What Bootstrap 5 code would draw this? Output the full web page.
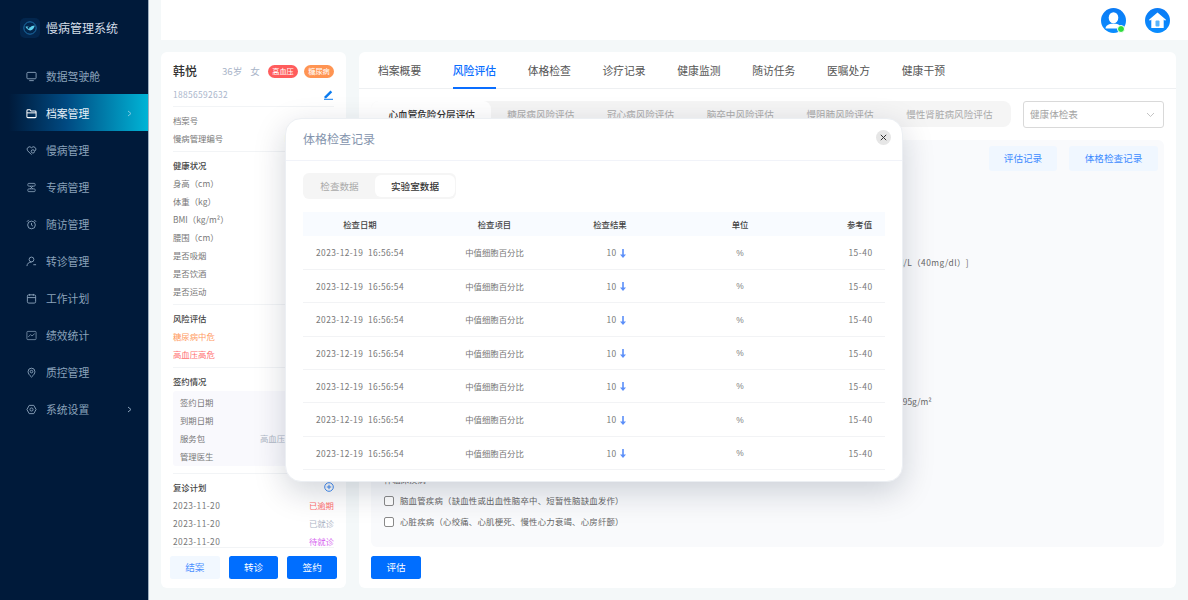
<!DOCTYPE html>
<html lang="zh">
<head>
<meta charset="utf-8">
<title>慢病管理系统</title>
<link href="https://cdn.jsdelivr.net/npm/bootstrap@5.3.0/dist/css/bootstrap.min.css" rel="stylesheet">
<style>
html,body{height:600px;overflow:hidden}
body{font-family:"Noto Sans CJK SC","Noto Sans",sans-serif;font-size:8.4px;color:#777;background:#f4f8f9;position:relative;text-spacing-trim:space-all;font-feature-settings:"chws" 0,"palt" 0,"halt" 0}
.app-shell{height:600px}
.side{width:149px;background:#001a3a;border-right:1px solid #9fb0c0;flex:none}
.brand{height:57px;padding:0 0 1px 20px;gap:6px;color:#d5dee8;font-size:12px}
.side-item{height:37px;padding:2px 0 0 26px;gap:9px;color:#8ba3bb;font-size:10.8px}
.side-item svg{width:11px;height:11px;flex:none}
.side-item.on{background:linear-gradient(90deg,rgba(0,26,58,0) 6%,#004a82 45%,#00b4d6 100%);color:#e8f1f8}
.side-arrow{margin-left:auto;margin-right:15px;width:7px!important;height:7px!important}
.top{height:40px;margin-left:12px;background:#fff;gap:19px;padding-right:18px}
.round-ico{width:25px;height:25px;border-radius:50%;background:linear-gradient(180deg,#0b7bf5,#0a8dff);position:relative}
.online{position:absolute;right:1px;bottom:0;width:6px;height:6px;border-radius:50%;background:#2fdc3c;border:1px solid #fff;box-sizing:content-box}
.work{height:536px;margin-top:12px;padding:0 12px;gap:13px}
.pcard{background:#fff;border-radius:6px}
.pat{width:185px;flex:none}
.pat-scroll{padding:10px 12px 0;height:495px;overflow:hidden}
.pat-name{font-size:12px;color:#333;font-weight:500;height:18px;line-height:18px}
.pat-meta{font-size:9.6px;color:#a8b4c8;line-height:18px;margin-left:25px;gap:8px}
.tagx{font-size:7.2px;color:#fff;line-height:13px;height:13px;width:30px;text-align:center;border-radius:7px}
.tagx-r{background:#ff5c5c}.tagx-o{background:#ff9452}
.tagrow{gap:6px}
.phone{color:#a9b5cb;line-height:18px;height:18px;margin-top:5px;letter-spacing:.34px}
.sect{border-top:1px solid #f2f4f6;padding:4px 0 4px}
.rw{height:18px;line-height:18px;display:flex;justify-content:space-between;white-space:nowrap}
.rw b{font-weight:500;color:#444}
.date-x{letter-spacing:.42px}
.val{color:#b0b8c6}
.soft{background:#f9f9fd;border-radius:3px;padding:2px 7px 1px;margin-top:1px;margin-bottom:3px}
.pat-foot{margin:0 12px;border-top:1px solid #f2f4f6;padding-top:8px;position:relative}
.pat-btns{margin:0 -3px;gap:9px}
.btn-x{width:50px;height:23px;padding:0;border:0;border-radius:2.5px;font-size:9.6px;line-height:23px}
.btn-fill{background:#006eff;color:#fff}
.btn-pale{background:#f2f8ff;color:#4a90ff}
.detail{min-width:0}
.main-tabs{height:37px;border-bottom:1px solid #eef0f2;padding-left:19px;gap:31.65px;font-size:10.8px;color:#555}
.main-tabs span{height:37px;line-height:36px;position:relative;white-space:nowrap}
.main-tabs .on{color:#0a6eff;font-weight:500;border-bottom:2px solid #0a6eff}
.detail-body{padding:12px 12px 0}
.subtabs{background:#f5f5f5;border-radius:8px;height:26px;font-size:9.6px;color:#aaa;white-space:nowrap;width:640px}
.subtabs span{padding:0 16.3px;line-height:26px}
.subtabs .on{background:#fff;color:#333;border-radius:8px;font-weight:500;padding:0 16px 0 17.5px}
.sel{width:141px;height:27px;border:1px solid #d9d9d9;border-radius:3px;font-size:9.6px;color:#a5a5a5;padding:0 8px 0 6px}
.panel{background:#f9fafc;border-radius:6px;height:407px;margin-top:12px;padding:6px 6px 0 13px}
.pbtn{height:25px;border:0;padding:0;background:#f0f7ff;color:#3d8bff;font-size:9.6px;border-radius:3px}
.pbtn-a{width:68px}.pbtn-b{width:89px}
.pbtn-row{gap:12px}
.lines{margin-top:18px}
.ln{height:21px;line-height:21px;color:#666;white-space:nowrap}
.ln .form-check-input{width:10px;height:10px;margin:0 6px 0 0;border-color:#8a8a8a;border-radius:2px;vertical-align:-1.5px;float:none}
.ln .tail{letter-spacing:.45px}
.ln-w{letter-spacing:.23px}
.gap-a{margin-top:13px}.gap-b{margin-top:15px}
.eval-wrap{margin-top:9px}
.dialog{position:absolute;left:285px;top:118px;width:618px;height:364px;border-radius:16px;border:1px solid #eceff3;box-shadow:0 10px 32px rgba(0,20,50,.18);background:#fff;overflow:hidden}
.dlg-head{height:42px;border-bottom:1px solid #f1f3f9;padding:0 11px 0 17px}
.dlg-title{font-size:12px;color:#8494ad;font-weight:400}
.dlg-close{width:15px;height:15px;border-radius:50%;background:#e6e6e6;border:0;padding:0;display:flex;align-items:center;justify-content:center;margin-top:-4px}
.dlg-body{padding:12px 17px 0}
.seg{width:153px;height:26px;background:#f5f5f5;border-radius:6px;font-size:9.6px;color:#aaa;padding:2px 1px}
.seg span{line-height:22px;text-align:center}
.seg .s1{width:71px}
.seg .s2{width:80px;background:#fff;color:#333;border-radius:6px;font-weight:500}
.rec{margin:13px 0 0;width:582px;table-layout:fixed;font-size:8.4px;--bs-table-bg:transparent}
.rec th{height:24px;padding:0;background:#f8fbff;color:#444;font-weight:500;text-align:center;vertical-align:middle;border:0}
.rec td{height:33.4px;padding:0;color:#777;text-align:center;vertical-align:middle;border-bottom:1px solid #f2f3f5;white-space:nowrap}
.rec .dt{letter-spacing:.42px;word-spacing:2.5px}
.rec .res{padding-left:12px;letter-spacing:.4px}
.rec .rng{letter-spacing:.55px;padding-left:4px}
.rec .rngh{padding-left:2px}
.rec .pct{font-family:"Liberation Sans",sans-serif;color:#808080;padding-top:1px}
.down{width:6px;height:9px;vertical-align:-1.5px;margin-left:3px}
</style>
</head>
<body>
<div class="app-shell d-flex">
  <nav class="side d-flex flex-column">
    <div class="brand d-flex align-items-center">
      <svg width="20" height="20" viewBox="0 0 20 20"><rect width="20" height="20" rx="5" fill="#03264d"/><circle cx="10" cy="10" r="6.2" fill="none" stroke="#1d6fa8" stroke-width="1"/><path d="M5.500 8.800c1.800-.7 3.300-.4 4.500.8 1-1.300 2.500-2.200 4.800-2.200-.5 2.600-2.400 4.800-4.700 5.200-1.800-.4-3.500-1.800-4.600-3.800z" fill="#5fd4ef"/><circle cx="8.500" cy="9.800" r="1" fill="#03264d"/></svg>
      <span>慢病管理系统</span>
    </div>
    <div class="side-item d-flex align-items-center"><svg viewBox="0 0 12 12" fill="none" stroke="currentColor"><rect x="1" y="1.500" width="10" height="7" rx="1"/><path d="M3.500 10.500h5"/></svg>数据驾驶舱</div>
    <div class="side-item on d-flex align-items-center"><svg viewBox="0 0 12 12" fill="none" stroke="#fff" stroke-width="1.100"><path d="M1 3a1 1 0 0 1 1-1h2.500l1 1.300H10a1 1 0 0 1 1 1V9.500a1 1 0 0 1-1 1H2a1 1 0 0 1-1-1z"/><path d="M1 5.300h10"/></svg>档案管理<svg class="side-arrow" viewBox="0 0 7 7" fill="none" stroke="#7fc8e0"><path d="M2 1l3 2.500L2 6"/></svg></div>
    <div class="side-item d-flex align-items-center"><svg viewBox="0 0 12 12" fill="none" stroke="currentColor"><path d="M6 10.500 1.800 6.300A2.600 2.600 0 0 1 6 3a2.600 2.600 0 0 1 4.200 3.300"/><circle cx="7.500" cy="7" r="1.800"/></svg>慢病管理</div>
    <div class="side-item d-flex align-items-center"><svg viewBox="0 0 12 12" fill="none" stroke="currentColor" stroke-width=".9"><rect x="2" y="1.500" width="8" height="3" rx="1"/><rect x="2" y="7.500" width="8" height="3" rx="1"/><path d="M4.500 4.500 7.500 7.500M7.500 4.500 4.500 7.500"/></svg>专病管理</div>
    <div class="side-item d-flex align-items-center"><svg viewBox="0 0 12 12" fill="none" stroke="currentColor"><circle cx="6" cy="6.500" r="4.200"/><path d="M6 4.300v2.400l1.500 1M1 3l2-2M11 3 9 1"/></svg>随访管理</div>
    <div class="side-item d-flex align-items-center"><svg viewBox="0 0 12 12" fill="none" stroke="currentColor"><circle cx="6" cy="3.800" r="2.600"/><path d="M1 11c.3-2.800 2-4.300 5-4.400M8 9.500h3"/></svg>转诊管理</div>
    <div class="side-item d-flex align-items-center"><svg viewBox="0 0 12 12" fill="none" stroke="currentColor"><rect x="1.500" y="2" width="9" height="9" rx="1.500"/><path d="M1.500 5h9M4 1v2M8 1v2"/></svg>工作计划</div>
    <div class="side-item d-flex align-items-center"><svg viewBox="0 0 12 12" fill="none" stroke="currentColor" stroke-opacity=".8"><rect x="1" y="1.500" width="10" height="9" rx="1"/><path d="M2.500 7.500 5 5l1.500 1.500L9.500 4"/></svg>绩效统计</div>
    <div class="side-item d-flex align-items-center"><svg viewBox="0 0 12 12" fill="none" stroke="currentColor"><path d="M6 11C3.500 8.800 2.300 6.900 2.300 5a3.700 3.700 0 0 1 7.400 0c0 1.900-1.200 3.800-3.700 6z"/><circle cx="6" cy="5" r="1.400"/></svg>质控管理</div>
    <div class="side-item d-flex align-items-center"><svg viewBox="0 0 12 12" fill="none" stroke="currentColor"><path d="M3.500 1.500h5L11 6 8.500 10.500h-5L1 6z"/><circle cx="6" cy="6" r="1.700"/></svg>系统设置<svg class="side-arrow" viewBox="0 0 7 7" fill="none" stroke="#8ba3bb"><path d="M2 1l3 2.500L2 6"/></svg></div>
  </nav>

  <div class="flex-grow-1 d-flex flex-column" style="min-width:0">
    <header class="top d-flex align-items-center justify-content-end">
      <div class="round-ico"><svg width="25" height="25" viewBox="0 0 25 25"><ellipse cx="12.500" cy="9.800" rx="4.800" ry="5.600" fill="#fff"/><path d="M4.500 20.500c.3-3.200 3-4 5.500-4.700h5c2.500.7 5.200 1.500 5.500 4.700z" fill="#fff"/></svg><span class="online"></span></div>
      <div class="round-ico"><svg width="25" height="25" viewBox="0 0 25 25"><path d="M12.500 4.500 21 11.800l-.9 1-1.400-1.200V20H6.300v-8.400l-1.400 1.200-.9-1z" fill="#fff"/><rect x="10.500" y="12.500" width="4" height="6" rx="1" fill="#58b4fb"/></svg></div>
    </header>

    <div class="work d-flex">
      <aside class="pcard pat d-flex flex-column">
        <div class="pat-scroll">
          <div class="d-flex align-items-center">
            <span class="pat-name">韩悦</span>
            <span class="pat-meta d-flex"><span>36岁</span><span>女</span></span>
            <span class="ms-auto d-flex align-items-center tagrow">
              <span class="tagx tagx-r">高血压</span><span class="tagx tagx-o">糖尿病</span>
            </span>
          </div>
          <div class="phone d-flex justify-content-between align-items-center"><span>18856592632</span>
            <svg width="11" height="11" viewBox="0 0 11 11"><path d="M1.500 7.500 7.500 1.500l1.700 1.700-6 6H1.500z" fill="#0a7bf0"/><path d="M1 10.300h9" stroke="#0a7bf0"/></svg>
          </div>
          <div class="sect" style="margin-top:3px">
            <div class="rw"><span>档案号</span></div>
            <div class="rw"><span>慢病管理编号</span><span class="val">MB20231219</span></div>
          </div>
          <div class="sect">
            <div class="rw"><b>健康状况</b></div>
            <div class="rw"><span>身高（cm）</span></div>
            <div class="rw"><span>体重（kg）</span></div>
            <div class="rw"><span>BMI（kg/m²）</span></div>
            <div class="rw"><span>腰围（cm）</span></div>
            <div class="rw"><span>是否吸烟</span></div>
            <div class="rw"><span>是否饮酒</span></div>
            <div class="rw"><span>是否运动</span></div>
          </div>
          <div class="sect">
            <div class="rw"><b>风险评估</b></div>
            <div class="rw"><span style="color:#ff9a62">糖尿病中危</span></div>
            <div class="rw"><span style="color:#ff6f6f">高血压高危</span></div>
          </div>
          <div class="sect">
            <div class="rw"><b>签约情况</b></div>
            <div class="soft">
              <div class="rw"><span>签约日期</span></div>
              <div class="rw"><span>到期日期</span></div>
              <div class="rw"><span>服务包</span><span class="val">高血压基础服务包</span></div>
              <div class="rw"><span>管理医生</span></div>
            </div>
          </div>
          <div class="sect">
            <div class="rw align-items-center"><b>复诊计划</b><svg width="10" height="10" viewBox="0 0 10 10" fill="none" stroke="#2f7ff0" stroke-width=".9"><circle cx="5" cy="5" r="4.300"/><path d="M5 2.800v4.400M2.800 5h4.400"/></svg></div>
            <div class="rw"><span class="date-x">2023-11-20</span><span style="color:#ff6f6f">已逾期</span></div>
            <div class="rw"><span class="date-x">2023-11-20</span><span style="color:#aeb6c6">已就诊</span></div>
            <div class="rw"><span class="date-x">2023-11-20</span><span style="color:#d86cf0">待就诊</span></div>
          </div>
        </div>
        <div class="pat-foot">
          <div class="pat-btns d-flex">
            <button class="btn-x btn-pale" type="button">结案</button>
            <button class="btn-x btn-fill" type="button">转诊</button>
            <button class="btn-x btn-fill" type="button">签约</button>
          </div>
        </div>
      </aside>

      <section class="pcard detail flex-grow-1">
        <div class="main-tabs d-flex">
          <span>档案概要</span><span class="on">风险评估</span><span>体格检查</span><span>诊疗记录</span><span>健康监测</span><span>随访任务</span><span>医嘱处方</span><span>健康干预</span>
        </div>
        <div class="detail-body">
          <div class="d-flex justify-content-between align-items-start">
            <div class="subtabs d-flex">
              <span class="on">心血管危险分层评估</span><span>糖尿病风险评估</span><span>冠心病风险评估</span><span>脑卒中风险评估</span><span>慢阻肺风险评估</span><span>慢性肾脏病风险评估</span>
            </div>
            <div class="sel d-flex align-items-center justify-content-between"><span>健康体检表</span><svg width="9" height="9" viewBox="0 0 9 9" fill="none" stroke="#b5b5b5" stroke-width=".8"><path d="M1 3l3.500 3.500L8 3"/></svg></div>
          </div>
          <div class="panel">
            <div class="d-flex justify-content-end pbtn-row">
              <button class="pbtn pbtn-a" type="button">评估记录</button>
              <button class="pbtn pbtn-b" type="button">体格检查记录</button>
            </div>
            <div class="lines">
              <div class="ln"><input class="form-check-input" type="checkbox">高血压（1~3级）</div>
              <div class="ln"><input class="form-check-input" type="checkbox">男性≥55岁；女性≥65岁</div>
              <div class="ln"><input class="form-check-input" type="checkbox">吸烟或被动吸烟</div>
              <div class="ln"><input class="form-check-input" type="checkbox">血脂异常 [ 总胆固醇 TC≥6.2mmol/L（240mg/dl）或低密度脂蛋白 LDL-C≥4.1mmol/L（160mg/dl）或高密度脂蛋白 HDL-C&lt;1.0mmol<span class="tail">/L（40mg/dl）]</span></div>
              <div class="ln"><input class="form-check-input" type="checkbox">早发心血管病家族史</div>
              <div class="ln"><input class="form-check-input" type="checkbox">腹型肥胖</div>
              <div class="ln"><input class="form-check-input" type="checkbox">高同型半胱氨酸血症</div>
              <div class="ln gap-a">靶器官损害</div>
              <div class="ln"><input class="form-check-input" type="checkbox">左心室肥厚</div>
              <div class="ln"><input class="form-check-input" type="checkbox">左心室肥厚 [ 心电图：Sokolow-Lyon 电压&gt;3.8mV或 Cornell 乘积&gt;244mV·ms ]；超声心动图左室质量指数 LVMI：男≥115g/m²，女≥95g/m²</div>
              <div class="ln"><input class="form-check-input" type="checkbox">颈动脉超声</div>
              <div class="ln"><input class="form-check-input" type="checkbox">估算的肾小球滤过率降低</div>
              <div class="ln gap-b">伴临床疾病</div>
              <div class="ln ln-w"><input class="form-check-input" type="checkbox">脑血管疾病（缺血性或出血性脑卒中、短暂性脑缺血发作）</div>
              <div class="ln ln-w"><input class="form-check-input" type="checkbox">心脏疾病（心绞痛、心肌梗死、慢性心力衰竭、心房纤颤）</div>
            </div>
          </div>
          <div class="eval-wrap"><button class="btn-x btn-fill" type="button">评估</button></div>
        </div>
      </section>
    </div>
  </div>
</div>

<div class="dialog">
  <div class="dlg-head d-flex align-items-center justify-content-between">
    <h5 class="dlg-title m-0">体格检查记录</h5>
    <button class="dlg-close" type="button" aria-label="关闭"><svg width="7" height="7" viewBox="0 0 7 7" stroke="#333" stroke-width="1"><path d="M.8.8l5.400 5.400M6.200.8.8 6.200"/></svg></button>
  </div>
  <div class="dlg-body">
    <div class="seg d-flex"><span class="s1">检查数据</span><span class="s2">实验室数据</span></div>
    <table class="table rec">
      <colgroup><col style="width:114px"><col style="width:155px"><col style="width:76px"><col style="width:184px"><col style="width:53px"></colgroup>
      <thead><tr><th>检查日期</th><th>检查项目</th><th>检查结果</th><th>单位</th><th class="rngh">参考值</th></tr></thead>
      <tbody>
        <tr><td class="dt">2023-12-19 16:56:54</td><td>中值细胞百分比</td><td class="res">10<svg class="down" viewBox="0 0 6 9"><path d="M2.200 0h1.600v5.500H6L3 9 0 5.500h2.200z" fill="#5b8ff9"/></svg></td><td class="pct">%</td><td class="rng">15-40</td></tr>
        <tr><td class="dt">2023-12-19 16:56:54</td><td>中值细胞百分比</td><td class="res">10<svg class="down" viewBox="0 0 6 9"><path d="M2.200 0h1.600v5.500H6L3 9 0 5.500h2.200z" fill="#5b8ff9"/></svg></td><td class="pct">%</td><td class="rng">15-40</td></tr>
        <tr><td class="dt">2023-12-19 16:56:54</td><td>中值细胞百分比</td><td class="res">10<svg class="down" viewBox="0 0 6 9"><path d="M2.200 0h1.600v5.500H6L3 9 0 5.500h2.200z" fill="#5b8ff9"/></svg></td><td class="pct">%</td><td class="rng">15-40</td></tr>
        <tr><td class="dt">2023-12-19 16:56:54</td><td>中值细胞百分比</td><td class="res">10<svg class="down" viewBox="0 0 6 9"><path d="M2.200 0h1.600v5.500H6L3 9 0 5.500h2.200z" fill="#5b8ff9"/></svg></td><td class="pct">%</td><td class="rng">15-40</td></tr>
        <tr><td class="dt">2023-12-19 16:56:54</td><td>中值细胞百分比</td><td class="res">10<svg class="down" viewBox="0 0 6 9"><path d="M2.200 0h1.600v5.500H6L3 9 0 5.500h2.200z" fill="#5b8ff9"/></svg></td><td class="pct">%</td><td class="rng">15-40</td></tr>
        <tr><td class="dt">2023-12-19 16:56:54</td><td>中值细胞百分比</td><td class="res">10<svg class="down" viewBox="0 0 6 9"><path d="M2.200 0h1.600v5.500H6L3 9 0 5.500h2.200z" fill="#5b8ff9"/></svg></td><td class="pct">%</td><td class="rng">15-40</td></tr>
        <tr><td class="dt">2023-12-19 16:56:54</td><td>中值细胞百分比</td><td class="res">10<svg class="down" viewBox="0 0 6 9"><path d="M2.200 0h1.600v5.500H6L3 9 0 5.500h2.200z" fill="#5b8ff9"/></svg></td><td class="pct">%</td><td class="rng">15-40</td></tr>
      </tbody>
    </table>
  </div>
</div>
<script src="https://cdn.jsdelivr.net/npm/bootstrap@5.3.0/dist/js/bootstrap.bundle.min.js"></script>
</body>
</html>
